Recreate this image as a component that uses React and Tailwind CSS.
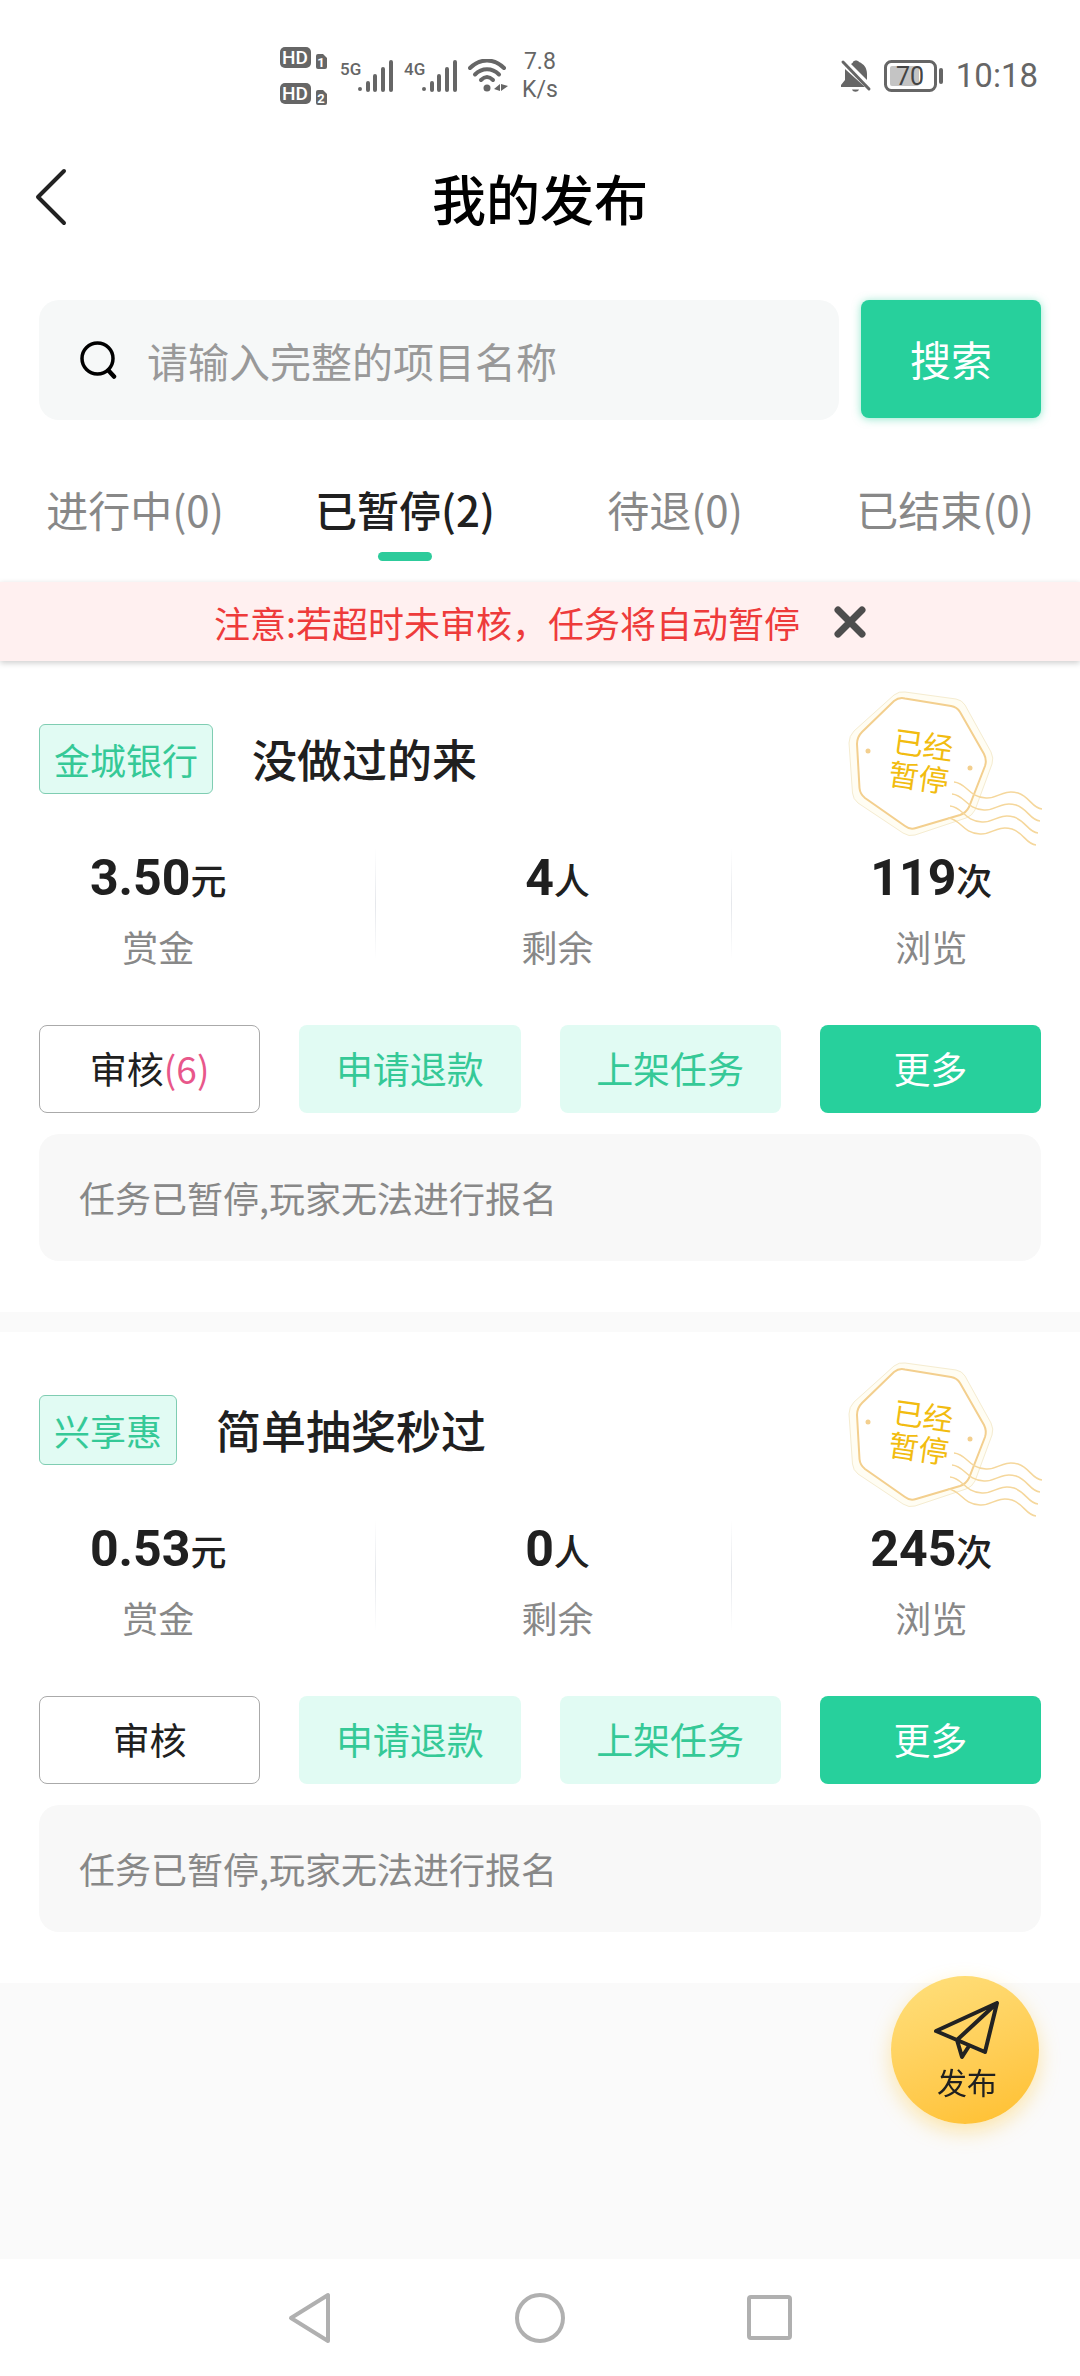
import React, { useState } from 'react'

const tabs = [
  { key: 'running', label: '进行中', count: 0 },
  { key: 'paused', label: '已暂停', count: 2 },
  { key: 'refund', label: '待退', count: 0 },
  { key: 'finished', label: '已结束', count: 0 },
]

const tasks = [
  { id: 1, tag: '金城银行', title: '没做过的来', price: '3.50', left: 4, views: 119, pending: 6 },
  { id: 2, tag: '兴享惠', title: '简单抽奖秒过', price: '0.53', left: 0, views: 245, pending: 0 },
]

function HdBadge({ sim }) {
  return (
    <svg width="48" height="22" viewBox="0 0 48 22">
      <rect x="0" y="0" width="31" height="21" rx="5" fill="#666" />
      <text x="15" y="17" textAnchor="middle" fontFamily="Roboto, sans-serif" fontSize="19" fontWeight="500" fill="#fff">HD</text>
      <path d="M38 7h5l4 4v9a2 2 0 0 1-2 2h-7a2 2 0 0 1-2-2V9a2 2 0 0 1 2-2z" fill="#666" />
      <text x="41" y="20" textAnchor="middle" fontFamily="Roboto, sans-serif" fontSize="13" fontWeight="700" fill="#fff">{sim}</text>
    </svg>
  )
}

function Signal({ type }) {
  return (
    <svg width="54" height="34" viewBox="0 0 54 34">
      <text x="0" y="16" fontFamily="Roboto, sans-serif" fontSize="17" fontWeight="500" fill="#666">{type}</text>
      <g stroke="#666" strokeWidth="4" strokeLinecap="round">
        <path d="M20 30v.1M28 24v7M35 17v14M43 10v21M51 3v28" />
      </g>
    </svg>
  )
}

function Wifi() {
  return (
    <svg width="40" height="34" viewBox="0 0 40 34" fill="none" stroke="#666" strokeLinecap="round">
      <path d="M2 9C12-1 26-1 36 9" strokeWidth="4" />
      <path d="M7 15.500c7-7 17-7 24 0" strokeWidth="4" />
      <path d="M13 21c4-4 8-4 12 0" strokeWidth="4" />
      <circle cx="19" cy="29" r="3.500" fill="#666" stroke="none" />
      <path d="M26 30l6-5v7zM33 25v7l7-5z" fill="#666" stroke="none" />
    </svg>
  )
}

function StatusBar() {
  return (
    <div className="flex h-[150px] items-center justify-between pl-[280px] pr-[42px] pt-[2px] font-[Roboto,sans-serif] text-[#666]">
      <div className="flex items-center">
        <div className="mr-3 flex flex-col gap-[14px]">
          <HdBadge sim="1" />
          <HdBadge sim="2" />
        </div>
        <Signal type="5G" />
        <span className="w-[10px]" />
        <Signal type="4G" />
        <span className="w-[10px]" />
        <Wifi />
        <div className="ml-[14px] text-center text-[23px] leading-[28px]">
          <div>7.8</div>
          <div>K/s</div>
        </div>
      </div>
      <div className="flex items-center">
        <svg width="32" height="34" viewBox="0 0 32 34" fill="#666">
          <path d="M11 5c1-1 2-1 2-2 1-2 5-2 6 0 5 2 8 6 8 12v6z" />
          <path d="M5 10l20 18H1v-2l4-5z" />
          <path d="M3 3l26 27" stroke="#666" strokeWidth="3" strokeLinecap="round" />
          <path d="M12 30.500h7c-1 3-6 3-7 0z" />
        </svg>
        <svg className="ml-3" width="60" height="32" viewBox="0 0 60 32">
          <rect x="1.500" y="1.500" width="50" height="29" rx="6" fill="none" stroke="#666" strokeWidth="3" />
          <rect x="6" y="6" width="29" height="20" rx="2" fill="#c4c4c4" />
          <rect x="55" y="8" width="4" height="16" rx="2" fill="#666" />
          <text x="26" y="25" textAnchor="middle" fontFamily="Roboto, sans-serif" fontSize="25" fill="#444">70</text>
        </svg>
        <span className="ml-3 text-[33px]">10:18</span>
      </div>
    </div>
  )
}

function PausedStamp() {
  return (
    <svg className="absolute right-[33px] top-6" width="205" height="165" viewBox="0 0 205 165" fill="none">
      <path d="M52 10Q57 6 63 7L114 14Q120 15 123 20L149 67Q152 73 150 79L133 125Q130 131 124 133L73 150Q67 152 61 148L16 118Q11 114 10.500 108L7 58Q7 51 12 46Z" stroke="#f5ecd0" fill="#fffdf3" />
      <path d="M52 16Q57 12 63 13.500L109 21Q115 22 118 27L142 69Q145 75 143 81L127 122Q124 128 118 130L74 143Q68 145 63 141L23 113Q18 109 17.500 103L15 59Q15 52 20 47Z" stroke="#f3cf8e" strokeWidth="2" fill="#fff" />
      <circle cx="26" cy="66" r="2.500" fill="#f3cf8e" />
      <circle cx="128" cy="83" r="2.500" fill="#f3cf8e" />
      <g stroke="#f5d79c" strokeWidth="1.500">
        <path d="M112 97C125 98 126 112 144 113C156 114 160 104 176 108C188 112 190 123 200 124" />
        <path d="M110 109C123 110 124 124 142 125C154 126 158 116 174 120C186 124 188 135 198 136" />
        <path d="M108 121C121 122 122 136 140 137C152 138 156 128 172 132C184 136 186 147 196 148" />
        <path d="M106 133C119 134 120 148 138 149C150 150 154 140 170 144C182 148 184 159 194 160" />
      </g>
      <g transform="rotate(8 79 77)" fill="#f2bc10" fontSize="30" textAnchor="middle">
        <text x="79" y="71">已经</text>
        <text x="79" y="104">暂停</text>
      </g>
    </svg>
  )
}

function Stat({ value, unit, label, className }) {
  return (
    <div className={`text-center ${className}`}>
      <p className="h-[60px] font-[Roboto,'Noto_Sans_CJK_SC',sans-serif] text-[50px] font-bold leading-[60px]">
        {value}
        <span className="text-[36px] font-medium">{unit}</span>
      </p>
      <p className="mt-[14px] text-[36px] leading-[48px] text-[#888]">{label}</p>
    </div>
  )
}

function Divider() {
  return <div className="h-[112px] bg-linear-to-b from-white via-gray-200 to-white" />
}

function TaskCard({ task }) {
  return (
    <section className="relative bg-white px-[39px] pb-[51px] pt-[63px]">
      <div className="flex items-center gap-[39px]">
        <span className="h-[70px] rounded-[6px] border border-[#7fcdb2] bg-[#e1fbf3] px-[14px] text-[36px] leading-[68px] text-[#35c997]">
          {task.tag}
        </span>
        <h2 className="text-[45px] font-medium leading-[70px]">{task.title}</h2>
      </div>
      <PausedStamp />

      <div className="mt-[54px] grid grid-cols-[336fr_1px_354fr_1px_309fr]">
        <Stat className="pr-[98px]" value={task.price} unit="元" label="赏金" />
        <Divider />
        <Stat className="pl-2" value={task.left} unit="人" label="剩余" />
        <Divider />
        <Stat className="pl-[90px]" value={task.views} unit="次" label="浏览" />
      </div>

      <div className="mt-[55px] grid grid-cols-4 gap-[39px] text-[37px]">
        <button className="h-[88px] rounded-[8px] border border-[#aaa] bg-white">
          审核{task.pending > 0 && <span className="text-[#e8578a]">({task.pending})</span>}
        </button>
        <button className="h-[88px] rounded-[8px] bg-[#e1fbf3] text-[#35c997]">申请退款</button>
        <button className="h-[88px] rounded-[8px] bg-[#e1fbf3] text-[#35c997]">上架任务</button>
        <button className="h-[88px] rounded-[8px] bg-[#27d09c] text-white">更多</button>
      </div>

      <p className="mt-[21px] rounded-[20px] bg-[#f8f8f8] px-10 py-9 text-[36px] leading-[55px] text-[#888]">
        任务已暂停,玩家无法进行报名
      </p>
    </section>
  )
}

function App() {
  const [activeTab, setActiveTab] = useState('paused')
  const [keyword, setKeyword] = useState('')
  const [showNotice, setShowNotice] = useState(true)

  return (
    <div className="flex min-h-screen flex-col bg-[#fafafa] font-['Noto_Sans_CJK_SC',sans-serif] text-[#202020]">
      <header className="bg-white">
        <StatusBar />

        <div className="grid h-[94px] grid-cols-[100px_1fr_100px] items-center">
          <button aria-label="返回" className="pl-[34px]">
            <svg width="34" height="58" viewBox="0 0 34 58" fill="none" stroke="#222" strokeWidth="4" strokeLinecap="round" strokeLinejoin="round">
              <path d="M30 3L4 29l26 26" />
            </svg>
          </button>
          <h1 className="text-center text-[54px] font-medium text-black">我的发布</h1>
        </div>

        {/* Search */}
        <form className="mt-[56px] flex gap-[22px] px-[39px]" onSubmit={(e) => e.preventDefault()}>
          <label className="flex h-[120px] flex-1 items-center gap-[30px] rounded-[20px] bg-[#f6f8f8] pl-10">
            <svg width="38" height="40" viewBox="0 0 38 40" fill="none" stroke="#000" strokeWidth="3.500" strokeLinecap="round">
              <circle cx="18.500" cy="18.500" r="15.500" />
              <path d="M29.500 30.500l5.500 6" strokeWidth="4.500" />
            </svg>
            <input
              type="text"
              aria-label="项目名称"
              value={keyword}
              onChange={(e) => setKeyword(e.target.value)}
              placeholder="请输入完整的项目名称"
              className="h-full flex-1 bg-transparent text-[41px] outline-none placeholder:text-[#999]"
            />
          </label>
          <button className="h-[118px] w-[180px] rounded-[8px] bg-[#27d09c] text-[41px] text-white shadow-[0_1px_8px_rgba(39,208,156,0.5)]">
            搜索
          </button>
        </form>

        {/* Tabs */}
        <nav className="grid grid-cols-4 pb-[21px] pt-[59px]">
          {tabs.map((tab) => (
            <button
              key={tab.key}
              onClick={() => setActiveTab(tab.key)}
              className={`flex flex-col items-center gap-[13px] text-[42px] leading-[60px] ${
                activeTab === tab.key ? 'font-medium' : 'text-[#888]'
              }`}
            >
              {tab.label}({tab.count})
              <span className={`h-[9px] w-[54px] rounded-full ${activeTab === tab.key ? 'bg-[#2dcb9b]' : ''}`} />
            </button>
          ))}
        </nav>
      </header>

      {showNotice && (
        <div className="relative z-10 flex h-[79px] items-center justify-center gap-[34px] bg-[#fff0f0] text-[36px] text-[#ee3b3b] shadow-[0_2px_6px_rgba(0,0,0,0.2)]">
          <p>注意:若超时未审核，任务将自动暂停</p>
          <button aria-label="关闭" onClick={() => setShowNotice(false)}>
            <svg width="32" height="32" viewBox="0 0 32 32" stroke="#4d4d4d" strokeWidth="7" strokeLinecap="round">
              <path d="M4 4l24 24M28 4L4 28" />
            </svg>
          </button>
        </div>
      )}

      <main className="flex flex-1 flex-col gap-5">
        {tasks.map((task) => (
          <TaskCard key={task.id} task={task} />
        ))}
      </main>

      <button className="fixed bottom-[252px] right-[41px] flex h-[148px] w-[148px] flex-col items-center rounded-full bg-linear-160 from-[#ffe07c] to-[#ffbf2a] pl-1 pt-6 text-[30px] leading-[42px] shadow-[0_8px_20px_rgba(255,200,60,0.4)]">
        <svg width="66" height="60" viewBox="0 0 66 60" fill="none" stroke="#222" strokeWidth="4" strokeLinecap="round" strokeLinejoin="round">
          <path d="M2 31L63 3L51 52L23 40ZM63 3L23 40L28 57L35 46" />
        </svg>
        发布
      </button>

      {/* System navigation */}
      <footer className="flex h-[117px] items-center justify-center gap-[180px] bg-white">
        <button aria-label="后退">
          <svg width="50" height="54" viewBox="0 0 50 54" fill="none" stroke="#b0b0b0" strokeWidth="4" strokeLinejoin="round">
            <path d="M43 4v46L6 27z" />
          </svg>
        </button>
        <button aria-label="主页">
          <svg width="50" height="50" viewBox="0 0 50 50" fill="none" stroke="#b0b0b0" strokeWidth="4">
            <circle cx="25" cy="25" r="23" />
          </svg>
        </button>
        <button aria-label="最近任务">
          <svg width="50" height="50" viewBox="0 0 50 50" fill="none" stroke="#b0b0b0" strokeWidth="4">
            <rect x="4" y="4" width="41" height="41" rx="2" />
          </svg>
        </button>
      </footer>
    </div>
  )
}

export default App
